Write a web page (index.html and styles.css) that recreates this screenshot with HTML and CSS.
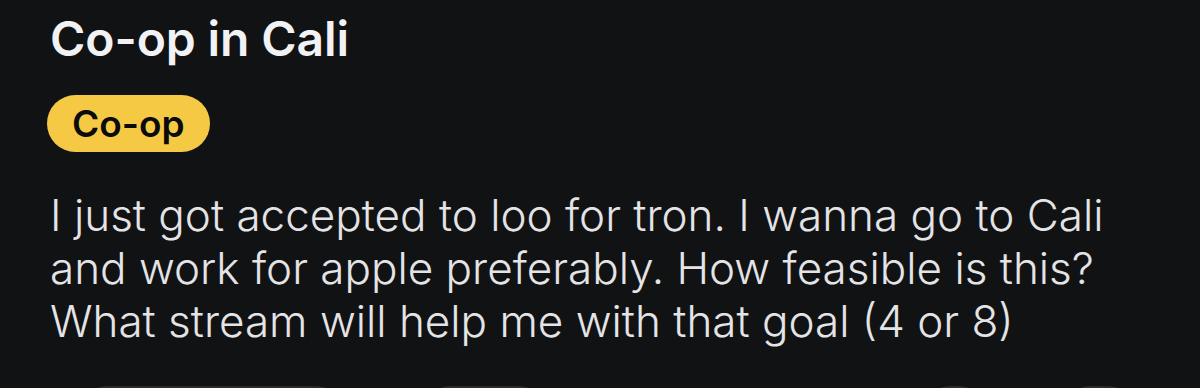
FILE: index.html
```html
<!DOCTYPE html>
<html>
<head>
<meta charset="utf-8">
<link rel="stylesheet" href="styles.css">
</head>
<body>
<div class="post">
  <h1 class="title">Co-op in Cali</h1>
  <div class="tags"><span class="badge">Co-op</span></div>
  <p class="text">I just got accepted to loo for tron. I wanna go to Cali<br>and work for apple preferably. How feasible is this?<br>What stream will help me with that goal (4 or 8)</p>
  <div class="actions">
    <span class="btn btn-a"></span>
    <span class="btn btn-b"></span>
    <span class="spacer"></span>
    <span class="btn btn-c"></span>
    <span class="btn btn-d"></span>
  </div>
</div>
</body>
</html>
```
FILE: styles.css
```css
html, body {
  margin: 0;
  padding: 0;
  background: #111214;
  overflow: hidden;
}
body {
  width: 1200px;
  height: 388px;
  font-family: Inter, "Noto Sans", sans-serif;
}
.post {
  padding: 10px 0 0 50px;
  display: flex;
  flex-direction: column;
}
.title {
  margin: 0;
  font-size: 48px;
  font-weight: 600;
  line-height: 58px;
  color: #f2f2f4;
  letter-spacing: -0.1px;
}
.tags {
  display: flex;
  margin-top: 27px;
  margin-left: -3px;
}
.badge {
  display: inline-flex;
  align-items: center;
  height: 57px;
  padding: 0 25px;
  border-radius: 29px;
  background: #f6c945;
  color: #0b0b0b;
  font-size: 37px;
  font-weight: 600;
}
.text {
  margin: 37px 0 0 0;
  white-space: nowrap;
  font-size: 44px;
  font-weight: 300;
  line-height: 53px;
  color: #e4e4e6;
}
.actions {
  display: flex;
  align-items: flex-start;
  height: 3px;
  overflow: hidden;
  margin-top: 38px;
  margin-left: 36px;
}
.btn {
  flex: none;
  height: 40px;
  border-radius: 20px;
  background: #2a2b2e;
}
.btn-a { width: 251px; }
.btn-b { width: 111px; margin-left: 92px; }
.spacer { flex: none; width: 389px; }
.btn-c { width: 51px; }
.btn-d { width: 60px; margin-left: 89px; }
```
